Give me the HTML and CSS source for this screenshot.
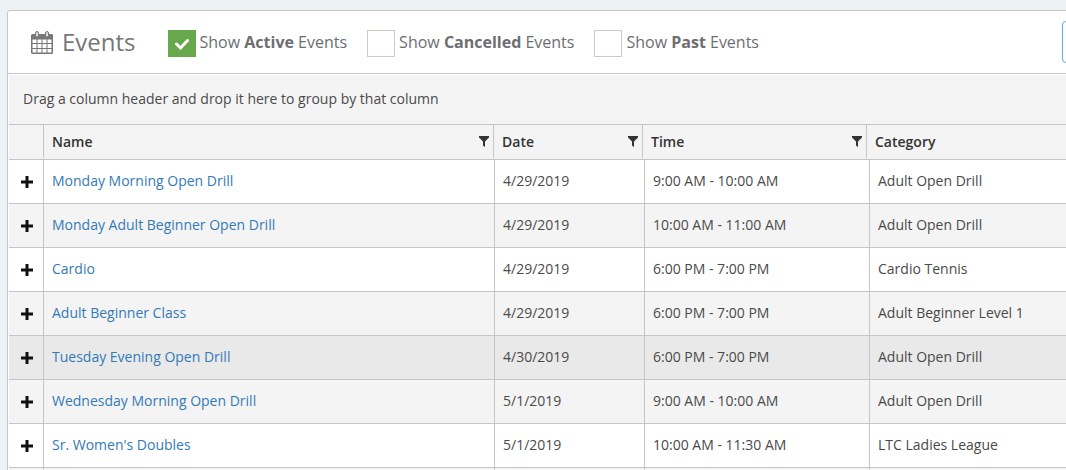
FILE: index.html
```html
<!DOCTYPE html>
<html lang="en">
<head>
    <meta charset="UTF-8">
    <title>Events</title>
    <link rel="stylesheet" href="styles.css">
</head>
<body>
<svg class="sprite" aria-hidden="true">
    <symbol id="plus" viewBox="0 0 14 14">
        <path d="M5.500 1h3v4.500H13v3H8.500V13h-3V8.500H1v-3h4.500z"/>
    </symbol>
    <symbol id="filter" viewBox="0 0 10 11">
        <path d="M0 0h10v1.500L6 5.500V11L4 9.500v-4L0 1.500z"/>
    </symbol>
</svg>
<div class="panel">
    <div class="panel-heading">
        <svg class="calendar" viewBox="0 0 22 23" aria-hidden="true">
            <path fill-rule="evenodd" d="M1.500 3H20.500Q22 3 22 4.500V21.500Q22 23 20.500 23H1.500Q0 23 0 21.500V4.500Q0 3 1.500 3z
                M1.500 8.500V12H5.500V8.500z M6.500 8.500V12H10.500V8.500z M11.500 8.500V12H15.500V8.500z M16.500 8.500V12H20.500V8.500z
                M1.500 13V17H5.500V13z M6.500 13V17H10.500V13z M11.500 13V17H15.500V13z M16.500 13V17H20.500V13z
                M1.500 18V21.500H5.500V18z M6.500 18V21.500H10.500V18z M11.500 18V21.500H15.500V18z M16.500 18V21.500H20.500V18z"/>
            <rect class="ring" x="4.500" y="0.500" width="3" height="5.500" rx="1.500"/>
            <rect class="ring" x="14.500" y="0.500" width="3" height="5.500" rx="1.500"/>
        </svg>
        <h1>Events</h1>
        <div class="filters">
            <label class="check">
                <input type="checkbox" checked>
                <svg viewBox="0 0 16 12" aria-hidden="true"><path d="M2.500 6l4 4 7-7.500"/></svg>
                <span>Show <b>Active</b> Events</span>
            </label>
            <label class="check">
                <input type="checkbox">
                <svg viewBox="0 0 16 12" aria-hidden="true"><path d="M2.500 6l4 4 7-7.500"/></svg>
                <span>Show <b>Cancelled</b> Events</span>
            </label>
            <label class="check">
                <input type="checkbox">
                <svg viewBox="0 0 16 12" aria-hidden="true"><path d="M2.500 6l4 4 7-7.500"/></svg>
                <span>Show <b>Past</b> Events</span>
            </label>
        </div>
        <button type="button" class="action" aria-label="Add event"></button>
    </div>
    <div class="grid">
        <div class="group-bar">Drag a column header and drop it here to group by that column</div>
        <div class="grid-header">
            <table>
                <colgroup><col class="head-toggle"><col class="head-name"><col class="head-date"><col class="head-time"><col></colgroup>
                <thead>
                <tr>
                    <th></th>
                    <th><div>Name <button type="button" aria-label="Filter name"><svg><use href="#filter"/></svg></button></div></th>
                    <th><div>Date <button type="button" aria-label="Filter date"><svg><use href="#filter"/></svg></button></div></th>
                    <th><div>Time <button type="button" aria-label="Filter time"><svg><use href="#filter"/></svg></button></div></th>
                    <th>Category</th>
                </tr>
                </thead>
            </table>
        </div>
        <table class="grid-body">
            <colgroup><col class="toggle"><col class="name"><col class="date"><col class="time"><col></colgroup>
            <tbody>
            <tr>
                <td><button type="button" aria-label="Expand"><svg><use href="#plus"/></svg></button></td>
                <td><a href="#">Monday Morning Open Drill</a></td>
                <td>4/29/2019</td>
                <td>9:00 AM - 10:00 AM</td>
                <td>Adult Open Drill</td>
            </tr>
            <tr>
                <td><button type="button" aria-label="Expand"><svg><use href="#plus"/></svg></button></td>
                <td><a href="#">Monday Adult Beginner Open Drill</a></td>
                <td>4/29/2019</td>
                <td>10:00 AM - 11:00 AM</td>
                <td>Adult Open Drill</td>
            </tr>
            <tr>
                <td><button type="button" aria-label="Expand"><svg><use href="#plus"/></svg></button></td>
                <td><a href="#">Cardio</a></td>
                <td>4/29/2019</td>
                <td>6:00 PM - 7:00 PM</td>
                <td>Cardio Tennis</td>
            </tr>
            <tr>
                <td><button type="button" aria-label="Expand"><svg><use href="#plus"/></svg></button></td>
                <td><a href="#">Adult Beginner Class</a></td>
                <td>4/29/2019</td>
                <td>6:00 PM - 7:00 PM</td>
                <td>Adult Beginner Level 1</td>
            </tr>
            <tr class="active">
                <td><button type="button" aria-label="Expand"><svg><use href="#plus"/></svg></button></td>
                <td><a href="#">Tuesday Evening Open Drill</a></td>
                <td>4/30/2019</td>
                <td>6:00 PM - 7:00 PM</td>
                <td>Adult Open Drill</td>
            </tr>
            <tr>
                <td><button type="button" aria-label="Expand"><svg><use href="#plus"/></svg></button></td>
                <td><a href="#">Wednesday Morning Open Drill</a></td>
                <td>5/1/2019</td>
                <td>9:00 AM - 10:00 AM</td>
                <td>Adult Open Drill</td>
            </tr>
            <tr>
                <td><button type="button" aria-label="Expand"><svg><use href="#plus"/></svg></button></td>
                <td><a href="#">Sr. Women's Doubles</a></td>
                <td>5/1/2019</td>
                <td>10:00 AM - 11:30 AM</td>
                <td>LTC Ladies League</td>
            </tr>
            <tr>
                <td></td>
                <td></td>
                <td></td>
                <td></td>
                <td></td>
            </tr>
            </tbody>
        </table>
    </div>
</div>
</body>
</html>
```

FILE: styles.css
```css
* {
    box-sizing: border-box;
}

body {
    margin: 0;
    padding: 10px 0 0 7px;
    height: 100vh;
    overflow: hidden;
    background: #edf2f5;
    color: #4a4a4a;
    font-family: "Open Sans", "Liberation Sans", sans-serif;
    font-size: 14px;
    line-height: 20px;
}

button {
    padding: 0;
    border: none;
    background: none;
    cursor: pointer;
}

.sprite {
    position: absolute;
    width: 0;
    height: 0;
}

/* the panel is wider than the window and runs off its right side */
.panel {
    margin-right: -40px;
    border: 1px solid #c5c5c9;
    border-radius: 3px;
    background: #fff;
}

.panel-heading {
    display: flex;
    align-items: center;
    height: 63px;
    padding: 0 7px 0 23px;
    border-bottom: 1px solid #c5c5c9;
    color: #6d6e71;
}

.calendar {
    width: 22px;
    height: 23px;
    margin-right: 9px;
    fill: #777;
}

.ring {
    fill: #ddd;
    stroke: #777;
}

h1 {
    margin: 0 32px 0 0;
    color: #777;
    font-size: 24px;
    font-weight: 400;
    line-height: 32px;
}

.filters {
    display: flex;
    flex: 1;
    gap: 20px;
    padding-top: 2px;
}

.check {
    position: relative;
    display: flex;
    align-items: center;
    gap: 4px;
    font-size: 16px;
    line-height: 24px;
}

.check input {
    appearance: none;
    width: 28px;
    height: 27px;
    margin: 0;
    border: 1px solid #d0c9c4;
    background: #fff;
}

.check input:checked {
    border-color: #68a84c;
    background: #68a84c;
}

.check svg {
    position: absolute;
    top: 8px;
    left: 6px;
    width: 16px;
    height: 12px;
    fill: none;
    stroke: #fff;
    stroke-width: 3;
    stroke-linecap: round;
}

.check span {
    padding-bottom: 3px;
}

.action {
    width: 36px;
    height: 42px;
    border: 1px solid #5dade9;
    border-radius: 4px;
}

.grid {
    padding: 1px 0 0 1px;
}

.group-bar {
    padding: 14px 14px 15px;
    border-bottom: 1px solid #c5c5c5;
    background: #f4f4f4;
}

.grid-header {
    padding-bottom: 1px;
    border-bottom: 1px solid #c5c5c5;
    background: #f4f4f4;
}

table {
    width: 100%;
    table-layout: fixed;
    border-collapse: separate;
    border-spacing: 0;
}

th {
    height: 33px;
    padding: 0 8px;
    border-right: 1px solid #c5c5c5;
    color: #333;
    font-weight: 600;
    text-align: left;
}

th div {
    display: flex;
    align-items: center;
    justify-content: space-between;
}

th button {
    display: flex;
    margin-right: -4px;
}

th svg {
    width: 10px;
    height: 11px;
    fill: #333;
}

td {
    height: 44px;
    padding: 0 8px 2px;
    border-right: 1px solid #c5c5c5;
    border-bottom: 1px solid #c5c5c5;
}

td:first-child {
    padding: 0 0 0 2px;
}

td button {
    display: block;
    margin: 0 auto;
}

td svg {
    display: block;
    width: 14px;
    height: 14px;
    fill: #111;
}

tr:nth-child(even) td {
    background: #f4f4f4;
}

tr.active td {
    background: #e9e9e9;
}

a {
    color: #337ab7;
    text-decoration: none;
}

a:hover {
    text-decoration: underline;
}

.head-toggle,
.toggle {
    width: 35px;
}

.head-name {
    width: 450px;
}

.head-date {
    width: 149px;
}

.head-time {
    width: 224px;
}

.name {
    width: 451px;
}

.date {
    width: 150px;
}

.time {
    width: 225px;
}
```
